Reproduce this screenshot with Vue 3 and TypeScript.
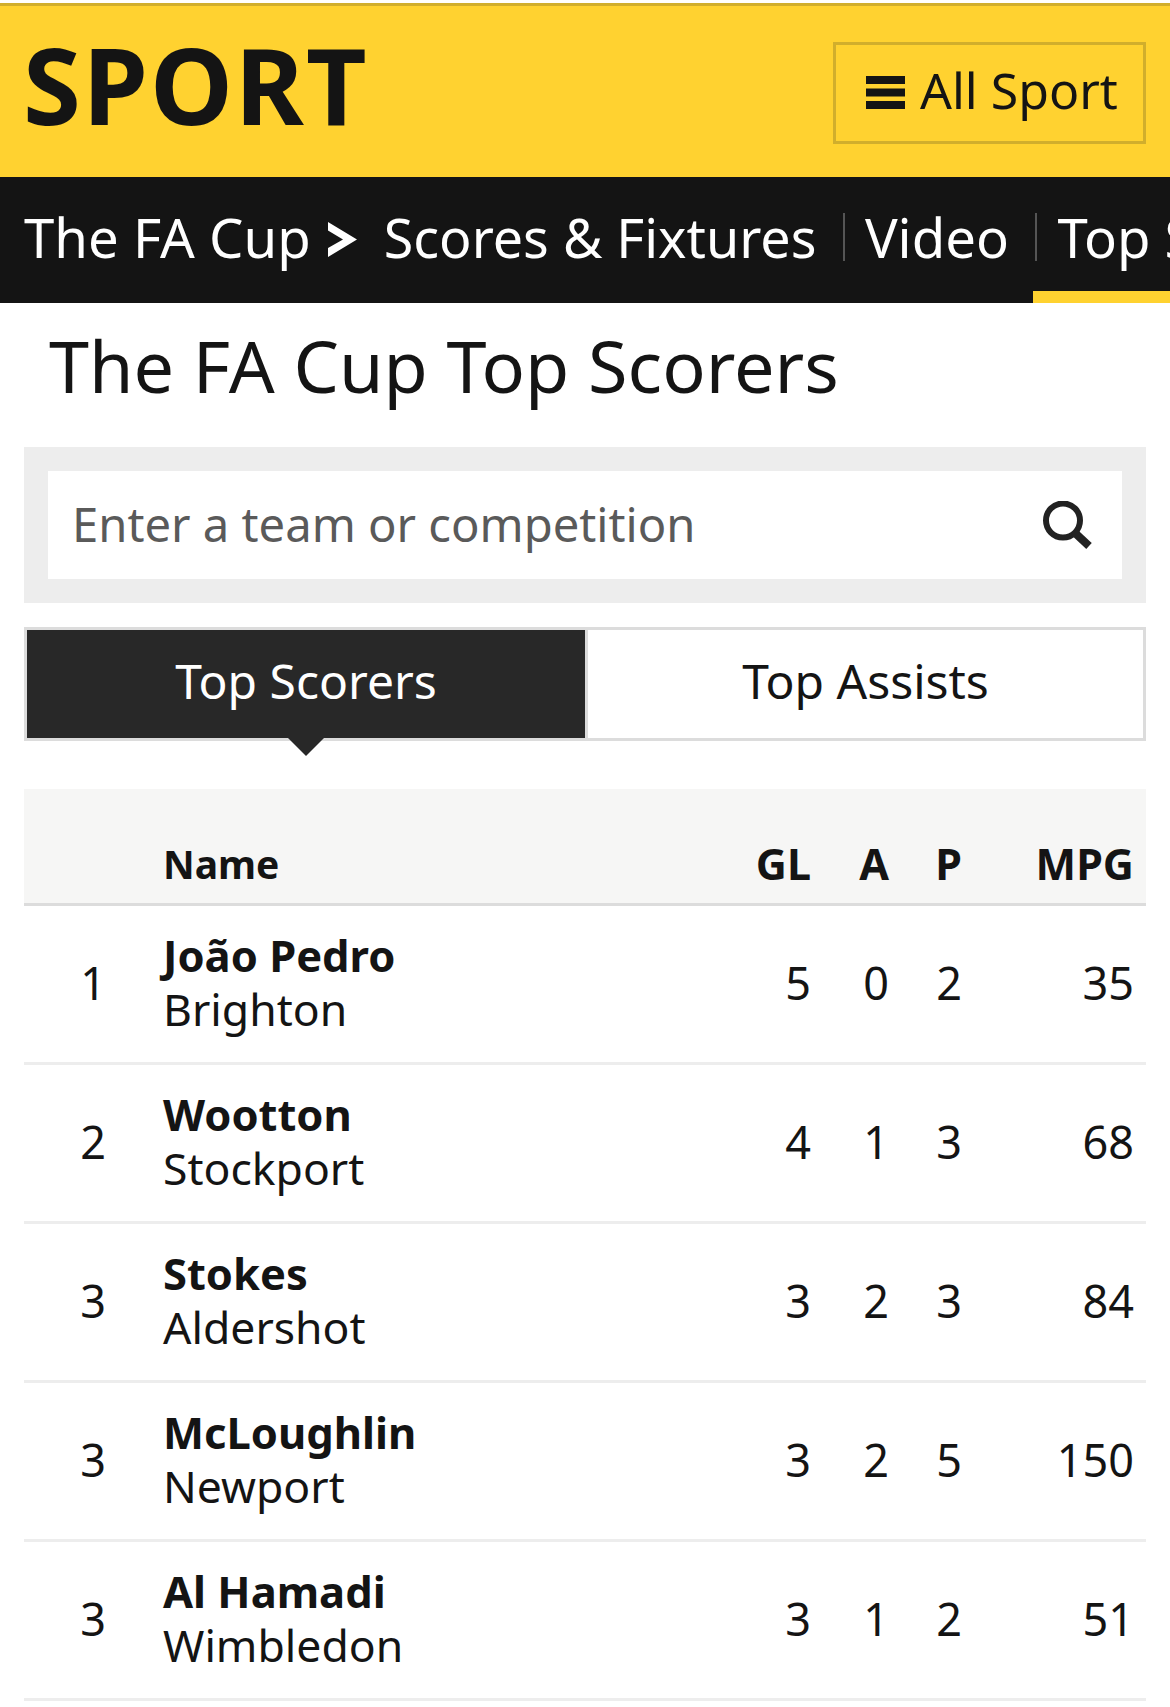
<script setup lang="ts">
interface Row { rank: number; name: string; team: string; gl: number; a: number; p: number; mpg: number }
const rows: Row[] = [
  { rank: 1, name: 'João Pedro', team: 'Brighton', gl: 5, a: 0, p: 2, mpg: 35 },
  { rank: 2, name: 'Wootton', team: 'Stockport', gl: 4, a: 1, p: 3, mpg: 68 },
  { rank: 3, name: 'Stokes', team: 'Aldershot', gl: 3, a: 2, p: 3, mpg: 84 },
  { rank: 3, name: 'McLoughlin', team: 'Newport', gl: 3, a: 2, p: 5, mpg: 150 },
  { rank: 3, name: 'Al Hamadi', team: 'Wimbledon', gl: 3, a: 1, p: 2, mpg: 51 },
]
</script>

<template>
  <div class="page">
    <header class="masthead">
      <div class="logo">SPORT</div>
      <button class="all">
        <svg class="burger" width="39" height="33" viewBox="0 0 39 33"><path d="M0 0h39v8H0zM0 12.500h39v8H0zM0 25h39v8H0z" fill="#141414"/></svg>
        <span>All Sport</span>
      </button>
    </header>
    <nav class="nav">
      <span class="crumb">The FA Cup</span>
      <svg class="chev" width="29" height="35" viewBox="0 0 29 35"><path d="M0 0l29 17.500L0 35v-9l15-8.500L0 8.500z" fill="#fff"/></svg>
      <span class="link first">Scores &amp; Fixtures</span>
      <span class="link sep">Video</span>
      <span class="link sep active">Top Scorers</span>
    </nav>
    <h1 class="title">The FA Cup Top Scorers</h1>
    <div class="search">
      <div class="field">
        <span>Enter a team or competition</span>
        <svg width="50" height="48" viewBox="0 0 50 48"><circle cx="20" cy="19.500" r="17" fill="none" stroke="#222" stroke-width="6"/><path d="M31 31l15 14" fill="none" stroke="#222" stroke-width="8"/></svg>
      </div>
    </div>
    <div class="tabs">
      <div class="tab on">Top Scorers</div>
      <div class="tab off">Top Assists</div>
    </div>
    <div class="table">
      <div class="grid head">
        <span></span><span class="nm">Name</span><span class="num">GL</span><span class="num">A</span><span class="num">P</span><span class="num">MPG</span>
      </div>
      <div v-for="r in rows" :key="r.name" class="grid row">
        <span class="rank">{{ r.rank }}</span>
        <div class="who"><b>{{ r.name }}</b><span>{{ r.team }}</span></div>
        <span class="num">{{ r.gl }}</span>
        <span class="num">{{ r.a }}</span>
        <span class="num">{{ r.p }}</span>
        <span class="num">{{ r.mpg }}</span>
      </div>
    </div>
  </div>
</template>

<style>
html, body { margin: 0; background: #fff; }
</style>
<style scoped>
.page { width: 1170px; height: 1707px; overflow: hidden; font-family: "Noto Sans", sans-serif; color: #141414; background: #fff; }
.masthead { height: 171px; border-top: 3px solid #fff; background: #ffd230; box-shadow: inset 0 3px 0 #d1ae2c; display: flex; align-items: center; justify-content: space-between; padding: 3px 24px 0; }
.logo { font-size: 105px; font-weight: 700; line-height: 1; letter-spacing: 2px; margin-top: -15px; margin-left: -1px; }
.all { box-sizing: border-box; width: 313px; height: 102px; border: 3px solid #d1ae2c; background: transparent; display: flex; align-items: center; gap: 15px; padding: 0 0 0 30px; font: 400 50px "Noto Sans", sans-serif; color: #141414; margin-top: 2px; }
.all span { padding-bottom: 5px; }
.nav { height: 126px; background: #141414; color: #fff; display: flex; align-items: flex-start; padding-left: 24px; overflow: hidden; white-space: nowrap; font-size: 54.500px; }
.crumb, .link { line-height: 1; padding-top: 33px; }
.chev { margin: 45px 27px 0 17px; flex: none; }
.link.first { font-size: 53.800px; padding-top: 33.500px; }
.link.sep { position: relative; margin-left: 48.500px; }
.link.sep::before { content: ""; position: absolute; left: -22px; top: 36px; height: 48px; width: 2px; background: #555; }
.link.active { flex: none; height: 126px; box-sizing: border-box; }
.link.active::after { content: ""; position: absolute; left: -24px; right: -200px; bottom: 0; height: 12px; background: #ffd230; }
.title { margin: 0; padding-left: 49px; height: 144px; box-sizing: border-box; font-size: 72px; font-weight: 400; line-height: 124px; }
.search { box-sizing: border-box; margin: 0 24px; height: 156px; padding: 24px; background: #ededed; }
.field { height: 108px; background: #fff; display: flex; align-items: center; justify-content: space-between; padding: 0 29px 0 24px; font-size: 47.200px; color: #5a5a5a; }
.field span { padding-bottom: 2px; }
.tabs { box-sizing: border-box; margin: 24px 24px 0; height: 114px; border: 3px solid #dcdcdc; background: #dcdcdc; display: flex; gap: 3px; }
.tab { flex: 1; display: flex; align-items: center; justify-content: center; font-size: 48px; position: relative; padding-bottom: 7px; box-sizing: border-box; }
.tab.off { background: #fff; }
.tab.on { background: #282828; color: #fff; flex: 0 0 558px; }
.tab.on::after { content: ""; position: absolute; left: 50%; margin-left: -18px; bottom: -18px; border: 18px solid transparent; border-bottom: 0; border-top: 18px solid #282828; }
.table { margin: 48px 24px 0; }
.grid { display: grid; grid-template-columns: 139px 1fr 90px 78px 73px 172px; padding-right: 12px; align-items: center; }
.head { height: 117px; box-sizing: border-box; background: #f6f6f5; border-bottom: 3px solid #dcdcdc; align-items: end; padding-bottom: 12px; font-size: 43px; font-weight: 700; line-height: 54px; }
.nm { grid-column: 2; font-size: 39px; }
.num { text-align: right; }
.row { height: 159px; box-sizing: border-box; border-bottom: 3px solid #ededed; padding-bottom: 4px; font-size: 45px; }
.rank { text-align: center; padding-right: 1px; }
.who { display: flex; flex-direction: column; line-height: 54px; }
.who b { font-weight: 700; font-size: 43.500px; }
.who span { font-size: 44.500px; }
</style>
